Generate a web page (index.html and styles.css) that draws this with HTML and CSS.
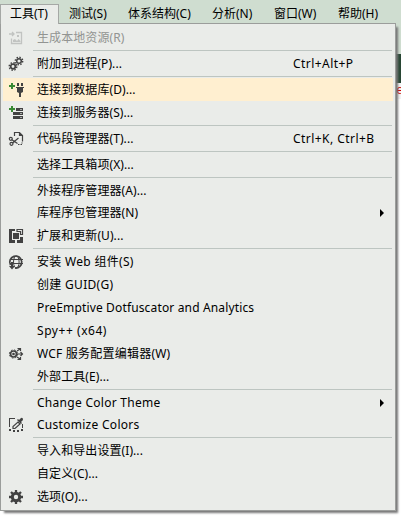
FILE: index.html
```
<!DOCTYPE html>
<html lang="zh-CN"><head><meta charset="utf-8"><title>工具菜单</title><link rel="stylesheet" href="styles.css"></head>
<body>
<nav class="bar"><span class="tab active">工具(T)</span><span class="tab test">测试(S)</span><span class="tab arch">体系结构(C)</span><span class="tab analyze">分析(N)</span><span class="tab win">窗口(W)</span><span class="tab help">帮助(H)</span></nav>
<div class="editor"><div class="strip"></div><div class="code">e</div></div>
<main class="menu">
<div class="row disabled"><svg viewBox="0 0 16 16"><path d="M1 4h5M4 2l2 2-2 2M8 2.500h5.500v11h-10v-5" fill="none" stroke="#c1c3c1" stroke-width="1.300"/><path d="M5 12v-2l2-1 2 2 1.500-2 2 2v1zM9 5h2v2H9z" fill="#c1c3c1"/></svg><span>生成本地资源(R)</span></div>
<div class="sep"></div>
<div class="row"><svg viewBox="0 0 16 16"><g fill="none" stroke="#424242"><circle cx="5" cy="10.500" r="2.300" stroke-width="1.700"/><circle cx="5" cy="10.500" r="3.800" stroke-width="1.400" stroke-dasharray="1.500 1.480"/><circle cx="11" cy="5" r="2.300" stroke-width="1.500"/><circle cx="11" cy="5" r="3.700" stroke-width="1.400" stroke-dasharray="1.450 1.450"/></g></svg><span>附加到进程(P)...</span><kbd>Ctrl+Alt+P</kbd></div>
<div class="sep"></div>
<div class="row hot"><svg viewBox="0 0 16 16"><path d="M1 3h2V1h2v2h2v2H5v2H3V5H1z" fill="#388a34"/><path d="M9 1h2v3H9zM13 1h2v3h-2zM8 5h8v1h-1v4l-2 1v4h-2v-4l-2-1V6H8z" fill="#424242"/></svg><span>连接到数据库(D)...</span></div>
<div class="row"><svg viewBox="0 0 16 16"><path d="M1 3h2V1h2v2h2v2H5v2H3V5H1z" fill="#388a34"/><path d="M8 3h7v3H8zM5 7h10v3H5zM5 11h10v3H5z" fill="#424242"/><path d="M12 4h2v1h-2zM12 8h2v1h-2zM12 12h2v1h-2z" fill="#a8aaa8"/></svg><span>连接到服务器(S)...</span></div>
<div class="sep"></div>
<div class="row"><svg viewBox="0 0 16 16"><g fill="none" stroke="#424242" stroke-width="1.200"><path d="M6.500 5V1.500h5l3 3v6M11.500 1.500v3h3M3.500 8.500l6 4M4.500 12l6-5"/><path d="M10 13.500h4v-2" stroke-dasharray="1.500 1"/><circle cx="2.800" cy="7.800" r="1.500"/><circle cx="3.500" cy="12.800" r="1.500"/></g></svg><span>代码段管理器(T)...</span><kbd>Ctrl+K, Ctrl+B</kbd></div>
<div class="sep"></div>
<div class="row"><span>选择工具箱项(X)...</span></div>
<div class="sep"></div>
<div class="row"><span>外接程序管理器(A)...</span></div>
<div class="row short"><span>库程序包管理器(N)</span><i class="arrow"></i></div>
<div class="row"><svg viewBox="0 0 16 16"><path d="M1 1h6v2H4v9h3v3H1zM5 5h6v6H5zM9 12h3V9h3v6H9z" fill="#424242"/><path d="M9 3.500V1.500h5.500v5h-2v-3z" fill="none" stroke="#424242" stroke-width="1.200"/></svg><span>扩展和更新(U)...</span></div>
<div class="sep"></div>
<div class="row"><svg viewBox="0 0 16 16"><g fill="none" stroke="#424242"><path d="M2.500 11A6 6 0 1 1 7 14" stroke-width="1.700"/><ellipse cx="8.300" cy="8" rx="2.800" ry="6"/><path d="M2 5.500h13M2 9.500h13" stroke-width="1.200"/></g><path d="M3 8h2v4h2l-3 3.500L1 12h2z" fill="#424242"/></svg><span class="web">安装 Web 组件(S)</span></div>
<div class="row"><span class="guid">创建 GUID(G)</span></div>
<div class="row"><span class="pre">PreEmptive Dotfuscator and Analytics</span></div>
<div class="row"><span class="spy">Spy++ (x64)</span></div>
<div class="row"><svg viewBox="0 0 16 16"><g fill="none" stroke="#424242"><circle cx="5.500" cy="8" r="3" stroke-width="1.700"/><circle cx="5.500" cy="8" r="4.100" stroke-dasharray="1.700 1.520"/><path d="M9 8h5M12.500 6l2 2-2 2M9 5l3-2M9.500 2.500h3v2.500M9 11l3 2M9.500 13.500h3v-2.500" stroke-width="1.200"/></g><circle cx="5.500" cy="8" r="1.300" fill="#424242"/></svg><span class="wcf">WCF 服务配置编辑器(W)</span></div>
<div class="row"><span>外部工具(E)...</span></div>
<div class="sep"></div>
<div class="row"><span class="theme">Change Color Theme</span><i class="arrow"></i></div>
<div class="row short"><svg viewBox="0 0 16 16"><path d="M1 1h6v1H2v8H1zM1 12h2v2H1zM5 13h2v2H5zM9 13h2v2H9zM13 12h2v2h-2zM14 7h1v4h-1zM9 3l1-1 1 1 2-2q2-1 2 2l-2 2 1 1-1 1z" fill="#424242"/><path d="M10 5l2 2-5 4.500H5v-2z" fill="none" stroke="#424242" stroke-width="1.200"/></svg><span class="theme">Customize Colors</span></div>
<div class="sep"></div>
<div class="row"><span>导入和导出设置(I)...</span></div>
<div class="row"><span>自定义(C)...</span></div>
<div class="row"><svg viewBox="0 0 16 16"><circle cx="8" cy="8" r="3.700" fill="none" stroke="#424242" stroke-width="3"/><path d="M8 1v3M8 12v3M1 8h3M12 8h3M3 3l2 2M11 11l2 2M13 3l-2 2M5 11l-2 2" stroke="#424242" stroke-width="2.300"/></svg><span>选项(O)...</span></div>
</main>
</body></html>
```
FILE: styles.css
```
* { box-sizing: border-box; }
body { margin: 0; width: 401px; height: 516px; overflow: hidden; position: relative; background: #fff; color: #000; font: 12px/16px "Noto Sans", "Noto Sans CJK SC", sans-serif; }
.bar { height: 54px; padding-top: 4px; background: #cfddd0; display: flex; white-space: nowrap; }
.tab { height: 20px; line-height: 19px; }
.active { position: relative; z-index: 3; width: 59px; padding-left: 9px; background: #eaece9; border: 1px solid #a5a8a5; border-bottom: 0; line-height: 18px; }
.test { width: 59px; padding-left: 10px; }
.arch { width: 84px; padding-left: 10px; }
.analyze { width: 62px; padding-left: 10px; }
.win { width: 64px; padding-left: 10px; }
.help { padding-left: 10px; }
.editor { padding-left: 396px; background: #fff; }
.strip { height: 29px; background: #294735; }
.code { height: 16px; color: #d00000; font: 13px/16px "Liberation Mono", monospace; background: #f3f3f3; }
.menu { position: absolute; z-index: 2; left: 0; top: 23px; width: 396px; height: 488px; padding: 2px 2px 0; background: #eaece9; border: 1px solid #9b9d9b; box-shadow: 3px 3px 2px -1px #777; }
.row { height: 23px; display: flex; align-items: center; position: relative; padding-left: 34px; white-space: nowrap; letter-spacing: .08px; }
.row.short { height: 22px; }
.row svg { width: 16px; height: 16px; margin-left: -29px; margin-right: 13px; flex: none; }
.row kbd { font: inherit; position: absolute; left: 290px; letter-spacing: .45px; }
.web { letter-spacing: .3px; }
.guid { letter-spacing: .3px; }
.pre { letter-spacing: .15px; }
.spy { letter-spacing: .55px; }
.wcf { letter-spacing: .22px; }
.theme { letter-spacing: .28px; }
.disabled { color: #929492; }
.hot { background: #ffefd0; }
.sep { height: 3px; margin-left: 30px; margin-right: 1px; border-top: 1px solid #eaece9; background: linear-gradient(#bdc5c1 0 1px, transparent 1px); }
.arrow { position: absolute; left: 377px; border-left: 4px solid #000; border-top: 4px solid transparent; border-bottom: 4px solid transparent; }
```
